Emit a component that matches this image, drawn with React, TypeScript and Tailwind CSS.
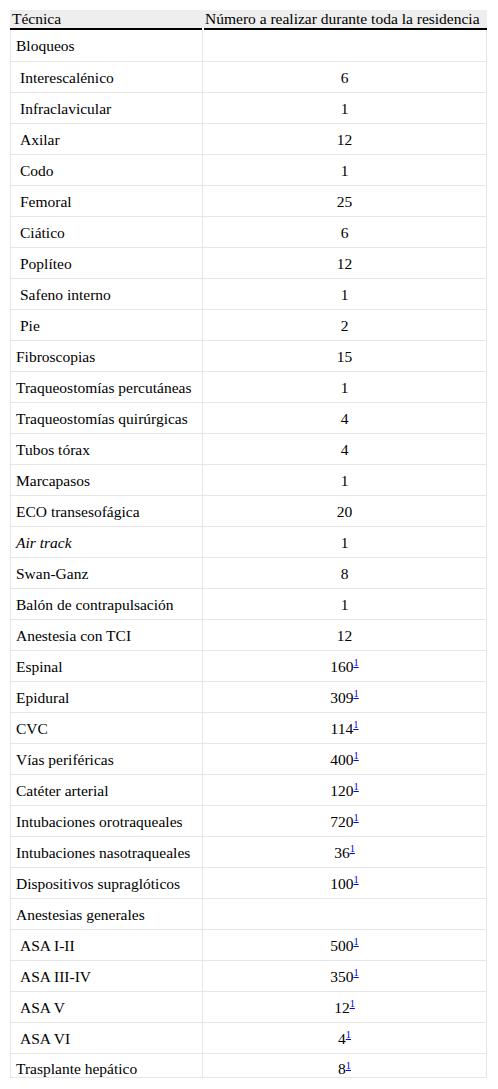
const rows: { label: string; value?: string; ref?: boolean; indent?: boolean; italic?: boolean }[] = [
  { label: "Bloqueos" },
  { label: "Interescalénico", value: "6", indent: true },
  { label: "Infraclavicular", value: "1", indent: true },
  { label: "Axilar", value: "12", indent: true },
  { label: "Codo", value: "1", indent: true },
  { label: "Femoral", value: "25", indent: true },
  { label: "Ciático", value: "6", indent: true },
  { label: "Poplíteo", value: "12", indent: true },
  { label: "Safeno interno", value: "1", indent: true },
  { label: "Pie", value: "2", indent: true },
  { label: "Fibroscopias", value: "15" },
  { label: "Traqueostomías percutáneas", value: "1" },
  { label: "Traqueostomías quirúrgicas", value: "4" },
  { label: "Tubos tórax", value: "4" },
  { label: "Marcapasos", value: "1" },
  { label: "ECO transesofágica", value: "20" },
  { label: "Air track", value: "1", italic: true },
  { label: "Swan-Ganz", value: "8" },
  { label: "Balón de contrapulsación", value: "1" },
  { label: "Anestesia con TCI", value: "12" },
  { label: "Espinal", value: "160", ref: true },
  { label: "Epidural", value: "309", ref: true },
  { label: "CVC", value: "114", ref: true },
  { label: "Vías periféricas", value: "400", ref: true },
  { label: "Catéter arterial", value: "120", ref: true },
  { label: "Intubaciones orotraqueales", value: "720", ref: true },
  { label: "Intubaciones nasotraqueales", value: "36", ref: true },
  { label: "Dispositivos supraglóticos", value: "100", ref: true },
  { label: "Anestesias generales" },
  { label: "ASA I-II", value: "500", ref: true, indent: true },
  { label: "ASA III-IV", value: "350", ref: true, indent: true },
  { label: "ASA V", value: "12", ref: true, indent: true },
  { label: "ASA VI", value: "4", ref: true, indent: true },
  { label: "Trasplante hepático", value: "8", ref: true },
];

function rowHeight(i: number) {
  if (i === 0) return "h-[32px] items-center";
  if (i === rows.length - 1) return "h-[24px] items-end";
  return "h-[31px] items-center";
}

export default function App() {
  return (
    <div className="min-h-[1089px] bg-white pl-[10px] pt-[10px] font-['Liberation_Serif',serif] text-[15.5px] text-black">
      <div className="w-[477px]">
        {/* header */}
        <div className="grid grid-cols-[193px_1fr] bg-[#eeeeee]">
          <div className="h-[18px] px-[2px] leading-[18px]">Técnica</div>
          <div className="h-[18px] pl-[2px] leading-[18px] whitespace-nowrap">
            Número a realizar durante toda la residencia
          </div>
        </div>
        <div className="grid h-[2px] grid-cols-[192px_1fr] gap-x-[2px]">
          <div className="bg-black" />
          <div className="bg-black" />
        </div>

        {/* body */}
        <div className="border-x border-[#e6e6e6]">
          {rows.map((r, i) => (
            <div
              key={r.label}
              className={`grid grid-cols-[192px_1fr] border-b border-[#e6e6e6] ${rowHeight(i)}`}
            >
              <div
                className={`flex h-full border-r border-[#e6e6e6] leading-[17px] ${i === rows.length - 1 ? "items-end" : "items-center"} ${r.indent ? "pl-[9px]" : "pl-[5px]"} ${r.italic ? "italic" : ""}`}
              >
                {r.label}
              </div>
              <div className="text-center leading-[17px]">
                {r.value}
                {r.ref && <sup className="text-[10.5px] text-[#0000ee] underline">1</sup>}
              </div>
            </div>
          ))}
        </div>
      </div>
    </div>
  );
}
